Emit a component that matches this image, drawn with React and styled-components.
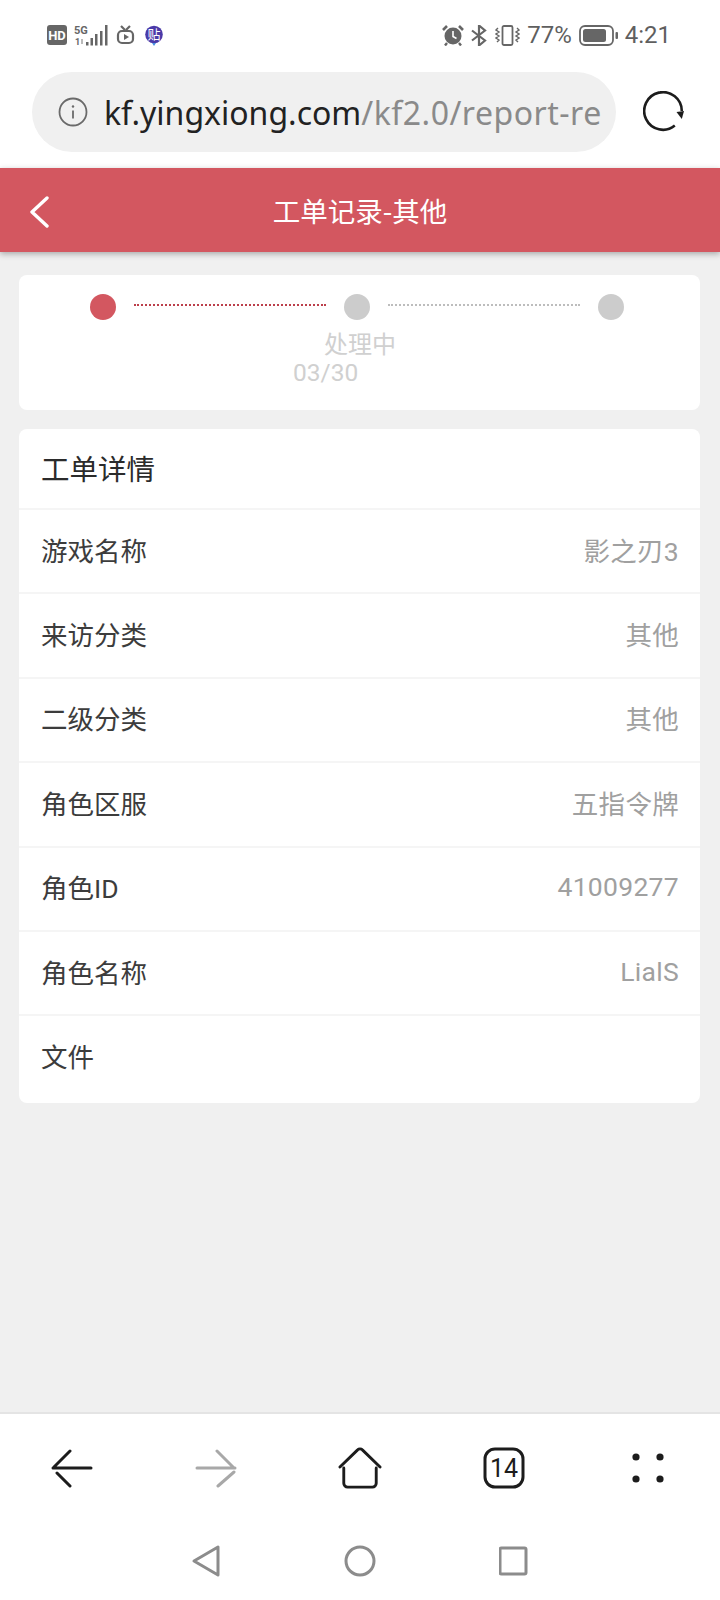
import React from "react";
import styled, { createGlobalStyle } from "styled-components";

const Global = createGlobalStyle`
  html, body { margin: 0; padding: 0; background: #fff; }
  * { box-sizing: border-box; }
  body { font-family: "Noto Sans CJK SC", "Noto Sans", sans-serif; }
`;

const Phone = styled.div`
  width: 720px;
  height: 1600px;
  display: flex;
  flex-direction: column;
  overflow: hidden;
  background: #fff;
`;

const StatusBar = styled.div`
  height: 72px;
  flex: none;
  display: flex;
  justify-content: space-between;
  align-items: flex-start;
  padding: 24px 49px 0 47px;
  color: #666;
`;
const StatusGroup = styled.div`
  display: flex;
  align-items: center;
  height: 22px;
  gap: ${(p) => p.$gap || 8}px;
`;
const StatusText = styled.span`
  font-family: Roboto, sans-serif;
  font-size: 24px;
  line-height: 22px;
  color: #5f5f5f;
`;

const AddressRow = styled.div`
  height: 96px;
  flex: none;
  padding: 0 0 16px 32px;
  display: flex;
  align-items: center;
  gap: 27px;
`;
const Pill = styled.div`
  width: 584px;
  height: 80px;
  border-radius: 40px;
  background: #f0f0f0;
  display: flex;
  align-items: center;
  padding: 0 0 0 26px;
  gap: 16px;
  overflow: hidden;
`;
const Url = styled.div`
  font-family: "Noto Sans", sans-serif;
  font-size: 32px;
  white-space: nowrap;
  color: #222;
`;
const UrlRest = styled.span`
  color: #8a8a8a;
  letter-spacing: 0.5px;
`;

const Main = styled.main`
  flex: 1;
  background: #f0f0f0;
  display: flex;
  flex-direction: column;
`;
const Header = styled.header`
  height: 84px;
  flex: none;
  position: relative;
  display: flex;
  align-items: center;
  justify-content: center;
  background: #d35760;
  box-shadow: 0 2px 6px rgba(0, 0, 0, 0.3);
`;
const HeaderBack = styled.svg`
  position: absolute;
  left: 28px;
  top: 28px;
`;
const Title = styled.h1`
  margin: 0;
  font-size: 27.5px;
  font-weight: 400;
  color: #fff;
`;

const Card = styled.section`
  margin: 0 20px 0 19px;
  background: #fff;
  border-radius: 8px;
`;
const ProgressCard = styled(Card)`
  margin-top: 23px;
  height: 135px;
  padding-top: 19px;
`;
const Steps = styled.div`
  width: 534px;
  margin-left: 71px;
  display: flex;
  align-items: flex-start;
`;
const Dot = styled.span`
  flex: none;
  width: 26px;
  height: 26px;
  border-radius: 50%;
  background: ${(p) => (p.$active ? "#d35760" : "#ccc")};
`;
const Dash = styled.span`
  flex: 1;
  margin: 10px 18px 0;
  border-top: 2px dotted ${(p) => (p.$active ? "#bc3f4b" : "#bdbdbd")};
`;
const StepLabel = styled.div`
  margin-top: 6px;
  margin-left: 305px;
  font-size: 24px;
  line-height: 33px;
  color: #d0d0d0;
`;
const StepDate = styled.div`
  margin-left: 274px;
  font-family: Roboto, sans-serif;
  font-size: 24.5px;
  line-height: 28px;
  color: #d0d0d0;
`;

const DetailCard = styled(Card)`
  margin-top: 19px;
`;
const CardTitle = styled.h2`
  margin: 0;
  height: 81px;
  padding: 0 22px 2px;
  display: flex;
  align-items: center;
  font-size: 28.5px;
  font-weight: 400;
  color: #2b2b2b;
  border-bottom: 2px solid #f5f5f5;
`;
const Row = styled.div`
  height: 84.4px;
  padding: 0 21px 4px 22px;
  display: flex;
  align-items: center;
  justify-content: space-between;
  border-bottom: 2px solid #f5f5f5;
  &:last-child {
    border-bottom: 0;
    height: 87px;
    padding-bottom: 8px;
  }
`;
const Label = styled.span`
  font-family: Roboto, "Noto Sans CJK SC", sans-serif;
  font-size: 26.5px;
  color: #3c3c3c;
`;
const Value = styled.span`
  font-family: Roboto, "Noto Sans CJK SC", sans-serif;
  font-size: 26.5px;
  letter-spacing: 0.3px;
  color: #a0a0a0;
`;

const Toolbar = styled.nav`
  height: 110px;
  flex: none;
  background: #fff;
  border-top: 2px solid #e4e4e4;
  display: grid;
  grid-template-columns: repeat(5, 144px);
  align-items: center;
  justify-items: center;
  padding-bottom: 1px;
`;
const SystemNav = styled.nav`
  height: 78px;
  flex: none;
  background: #fff;
  display: grid;
  grid-template-columns: 154px 154px 154px;
  padding-left: 129px;
  justify-items: center;
  align-items: center;
`;
const TabLabel = styled.text`
  font-family: Roboto, sans-serif;
  font-size: 25px;
  fill: #1c1c1c;
`;
const TinyLabel = styled.text`
  font-family: Roboto, sans-serif;
  font-weight: 700;
  fill: ${(p) => p.$fill || "#666"};
`;
const BadgeLabel = styled.text`
  font-family: "Noto Sans CJK SC", sans-serif;
  font-size: 13px;
  fill: #fff;
`;

const LeftStatus = () => (
  <StatusGroup $gap={7}>
    <svg width="20" height="20" viewBox="0 0 20 20">
      <rect width="20" height="20" rx="3" fill="#666" />
      <TinyLabel x="10" y="15" fontSize="13" textAnchor="middle" $fill="#fff">HD</TinyLabel>
    </svg>
    <svg width="34" height="21" viewBox="0 0 34 21">
      <TinyLabel x="0" y="9" fontSize="11">5G</TinyLabel>
      <TinyLabel x="1" y="20" fontSize="9">1</TinyLabel>
      <g fill="#666">
        <rect x="7" y="14" width="2" height="5" fill="#bbb" />
        <rect x="12" y="17" width="2.5" height="3.5" />
        <rect x="16.5" y="13" width="2.5" height="7.5" />
        <rect x="21" y="9" width="2.5" height="11.5" />
        <rect x="26" y="6" width="2.5" height="14.5" />
        <rect x="31" y="0" width="2.5" height="20.5" />
      </g>
    </svg>
    <svg width="20" height="20" viewBox="0 0 20 20" style={{ marginLeft: 1 }}>
      <g fill="none" stroke="#666" strokeWidth="2.2">
        <rect x="2" y="6" width="15" height="12" rx="4" />
        <path d="M5 1l4 4M14 1l-4 4" />
      </g>
      <path d="M8 9l5 3-5 3z" fill="#666" />
    </svg>
    <svg width="20" height="21" viewBox="0 0 20 21" style={{ marginLeft: 2 }}>
      <circle cx="9" cy="9.5" r="8.8" fill="#4a3aa8" />
      <path d="M7 18l2 3 2-3z" fill="#4a90e0" />
      <BadgeLabel x="9" y="14" textAnchor="middle">贴</BadgeLabel>
    </svg>
  </StatusGroup>
);

const RightStatus = () => (
  <StatusGroup $gap={7}>
    <svg width="22" height="21" viewBox="0 0 22 21">
      <circle cx="11" cy="11" r="8.5" fill="#666" />
      <path d="M11 6v5.5l3.5 2" fill="none" stroke="#fff" strokeWidth="1.6" />
      <path d="M1 5l4-4M21 5l-4-4" stroke="#666" strokeWidth="2.6" />
      <path d="M5 18l-2 2.5M17 18l2 2.5" stroke="#666" strokeWidth="2.4" />
    </svg>
    <svg width="17" height="21" viewBox="0 0 17 21">
      <path d="M1 5.5l13 10-6 5V.5l6 5-13 10" fill="none" stroke="#666" strokeWidth="2.2" />
    </svg>
    <svg width="25" height="21" viewBox="0 0 25 21">
      <rect x="7.5" y="1" width="10" height="19" rx="1.5" fill="none" stroke="#666" strokeWidth="1.8" />
      <path d="M3 3l-2 2 3 2-3 2 3 2-3 2 3 2-2 2M22 3l2 2-3 2 3 2-3 2 3 2-3 2 2 2" fill="none" stroke="#666" strokeWidth="1.4" />
    </svg>
    <StatusText>77%</StatusText>
    <svg width="39" height="21" viewBox="0 0 39 21">
      <rect x="1" y="1" width="33" height="19" rx="5" fill="none" stroke="#666" strokeWidth="1.8" />
      <rect x="4" y="4" width="23" height="13" rx="2.5" fill="#666" />
      <rect x="36.5" y="7" width="2.5" height="7" rx="1" fill="#666" />
    </svg>
    <StatusText>4:21</StatusText>
  </StatusGroup>
);

const rows = [
  ["游戏名称", "影之刃3"],
  ["来访分类", "其他"],
  ["二级分类", "其他"],
  ["角色区服", "五指令牌"],
  ["角色ID", "41009277"],
  ["角色名称", "LialS"],
  ["文件", ""],
];

export default function App() {
  return (
    <Phone>
      <Global />
      <StatusBar>
        <LeftStatus />
        <RightStatus />
      </StatusBar>
      <AddressRow>
        <Pill>
          <svg width="30" height="30" viewBox="0 0 30 30" style={{ flex: "none" }}>
            <circle cx="15" cy="15" r="13.5" fill="none" stroke="#6a6a6a" strokeWidth="1.8" />
            <path d="M15 13.5v8" stroke="#6a6a6a" strokeWidth="1.8" />
            <circle cx="15" cy="9.5" r="1.2" fill="#6a6a6a" />
          </svg>
          <Url>
            kf.yingxiong.com<UrlRest>/kf2.0/report-re</UrlRest>
          </Url>
        </Pill>
        <svg width="42" height="42" viewBox="0 0 42 42">
          <path d="M31.8 34.6A18.8 18.8 0 1 1 38.8 20" fill="none" stroke="#1c1c1c" strokeWidth="2.6" />
          <path d="M33.5 21L41 20l-2.2 8z" fill="#1c1c1c" />
        </svg>
      </AddressRow>
      <Main>
        <Header>
          <HeaderBack width="22" height="32" viewBox="0 0 22 32">
            <path d="M19 2L4 16l15 14" fill="none" stroke="#fff" strokeWidth="3.4" strokeLinecap="round" strokeLinejoin="round" />
          </HeaderBack>
          <Title>工单记录-其他</Title>
        </Header>
        <ProgressCard>
          <Steps>
            <Dot $active />
            <Dash $active />
            <Dot />
            <Dash />
            <Dot />
          </Steps>
          <StepLabel>处理中</StepLabel>
          <StepDate>03/30</StepDate>
        </ProgressCard>
        <DetailCard>
          <CardTitle>工单详情</CardTitle>
          {rows.map(([k, v]) => (
            <Row key={k}>
              <Label>{k}</Label>
              <Value>{v}</Value>
            </Row>
          ))}
        </DetailCard>
      </Main>
      <Toolbar>
        <svg width="44" height="40" viewBox="0 0 44 40">
          <path d="M3 20h38M20 3L4 19M7 25l13 13" fill="none" stroke="#1c1c1c" strokeWidth="3" strokeLinecap="round" />
        </svg>
        <svg width="44" height="40" viewBox="0 0 44 40">
          <path d="M3 20h38M23 3l17 17M40 24L24 38" fill="none" stroke="#a8a8a8" strokeWidth="3" strokeLinecap="round" />
        </svg>
        <svg width="44" height="42" viewBox="0 0 46 44">
          <path d="M2 21L20.5 3a3.5 3.5 0 0 1 5 0L44 21" fill="none" stroke="#1c1c1c" strokeWidth="3" strokeLinecap="round" />
          <path d="M6 22v16a4 4 0 0 0 4 4h26a4 4 0 0 0 4-4V22" fill="none" stroke="#1c1c1c" strokeWidth="3" strokeLinecap="round" />
        </svg>
        <svg width="42" height="42" viewBox="0 0 42 42">
          <rect x="2" y="2" width="38" height="38" rx="10" fill="none" stroke="#1c1c1c" strokeWidth="3" />
          <TabLabel x="21" y="30" textAnchor="middle">14</TabLabel>
        </svg>
        <svg width="32" height="30" viewBox="0 0 32 30">
          <g fill="#1c1c1c">
            <circle cx="4" cy="4" r="3.6" />
            <circle cx="28" cy="4" r="3.6" />
            <circle cx="4" cy="26" r="3.6" />
            <circle cx="28" cy="26" r="3.6" />
          </g>
        </svg>
      </Toolbar>
      <SystemNav>
        <svg width="30" height="34" viewBox="0 0 30 34">
          <path d="M27 3v28L3 17z" fill="none" stroke="#8c8c8c" strokeWidth="3" strokeLinejoin="round" />
        </svg>
        <svg width="34" height="34" viewBox="0 0 34 34">
          <circle cx="17" cy="17" r="14" fill="none" stroke="#8c8c8c" strokeWidth="3" />
        </svg>
        <svg width="30" height="30" viewBox="0 0 30 30">
          <rect x="1" y="2" width="26" height="26" rx="1.5" fill="none" stroke="#8c8c8c" strokeWidth="3" />
        </svg>
      </SystemNav>
    </Phone>
  );
}
